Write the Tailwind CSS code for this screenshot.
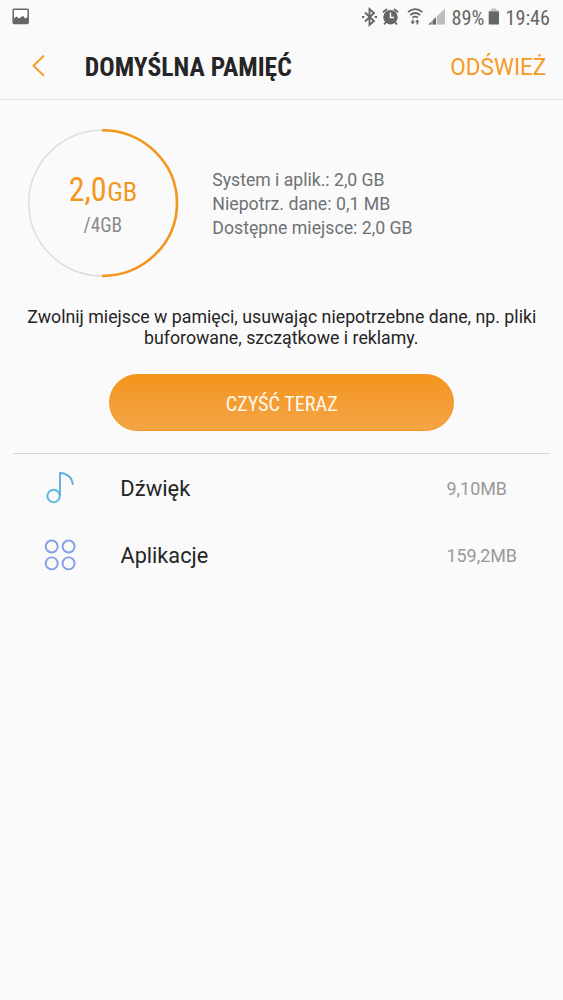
<!DOCTYPE html>
<html lang="pl">
<head>
<meta charset="utf-8">
<title>Domyślna pamięć</title>
<script src="https://cdn.jsdelivr.net/npm/@tailwindcss/browser@4"></script>
</head>
<body class="bg-[#fafafa]">
<div class="flex h-[1000px] w-[563px] flex-col overflow-hidden bg-[#fafafa] font-['Roboto',sans-serif] text-[#252525]">
  <div class="flex h-9 shrink-0 items-start justify-between">
    <svg class="h-9 w-10" viewBox="0 0 40 36"><rect x="13.2" y="9.2" width="15" height="14.4" rx="1" fill="#fff" stroke="#666" stroke-width="1.5"/><path d="M14 18.500l2.500-2 2.500 2 4-2.700 2 2.700 3-1.500v7H14z" fill="#666"/></svg>
    <svg class="h-9 w-[213px]" viewBox="350 0 213 36">
      <path d="M365 12.500l9 8.500-4.500 4V9l4.500 4-9 8.500M362 17h2.300M374.700 17h2.300" fill="none" stroke="#666" stroke-width="1.9"/>
      <circle cx="390.500" cy="17.200" r="7.200" fill="#666"/><path d="M383 12.200l4-3.200M398 12.200l-4-3.200M386 22l-2 2.500M395 22l2 2.500" stroke="#666" stroke-width="1.8"/><path d="M390.500 12.500V17.500H394" fill="none" stroke="#fafafa" stroke-width="1.5"/>
      <path d="M408 12.200q7.200-6 14.400 0M410.200 15q5-4 10 0M412.400 17.700q2.800-2.300 5.600 0" fill="none" stroke="#666" stroke-width="1.7"/>
      <path d="M412.700 19.500v3M417.300 24.500v-3" stroke="#666" stroke-width="1.4"/><path d="M410.500 21.500h4.400l-2.200 3zM415.100 22.300h4.400l-2.200-3z" fill="#666"/>
      <path d="M428.500 24.500L445 8.500v16z" fill="#bdbdbd"/><path d="M428.500 24.500l7.500-7.300v7.300z" fill="#666"/><path d="M432 20v5M436.500 16v9" stroke="#fafafa" stroke-width=".8"/>
      <path d="M491.300 8.500h5v2h2.700v2h-10v-2h2.300z" fill="#bdbdbd"/><path d="M488.700 11.500h10.300v13h-10.300z" fill="#666"/>
      <g font-family="'Roboto Condensed',Roboto,sans-serif" font-stretch="75%" font-size="20.300" fill="#666"><text x="451.500" y="24.500" textLength="33" lengthAdjust="spacingAndGlyphs">89%</text><text x="505.500" y="24.500" textLength="44.500" lengthAdjust="spacingAndGlyphs">19:46</text></g>
    </svg>
  </div>
  <header class="flex h-16 shrink-0 justify-between border-b border-[#dfdfdf]">
    <svg class="h-[63px] w-[320px]" viewBox="0 36 320 63"><path d="M44 55.500L33.500 65.700 44 75.900" fill="none" stroke="#f49a24" stroke-width="1.9"/><text x="84.800" y="75.500" font-family="'Roboto Condensed',Roboto,sans-serif" font-stretch="75%" font-weight="700" font-size="25" textLength="207" lengthAdjust="spacingAndGlyphs" fill="#252525">DOMYŚLNA PAMIĘĆ</text></svg>
    <svg class="h-[63px] w-[133px]" viewBox="430 36 133 63"><text x="450.300" y="74.700" font-size="23" textLength="96" lengthAdjust="spacingAndGlyphs" fill="#f49a24">ODŚWIEŻ</text></svg>
  </header>
  <main class="flex flex-col">
    <section class="flex h-[205px] items-start">
      <svg class="h-[190px] w-[200px] shrink-0" viewBox="0 100 200 190">
        <path d="M102.500 130.300A73.700 72.850 0 0 0 102.500 276" fill="none" stroke="#dedede" stroke-width="1.5"/>
        <path d="M102 130.300A75 72.850 0 0 1 102 276" fill="none" stroke="#f4951c" stroke-width="2.600"/>
        <g font-family="'Roboto Condensed',Roboto,sans-serif" font-stretch="75%" fill="#f4951c"><text x="68.700" y="201.300" font-size="33" textLength="38" lengthAdjust="spacingAndGlyphs">2,0</text><text x="107.200" y="201.300" font-size="25.500" textLength="30" lengthAdjust="spacingAndGlyphs">GB</text>
        <text x="83.500" y="231.500" font-size="19.300" textLength="38.500" lengthAdjust="spacingAndGlyphs" fill="#8a8a8a">/4GB</text></g>
      </svg>
      <svg class="h-[190px] w-[240px] shrink-0" viewBox="200 100 240 190"><g font-size="17.700" fill="#6e7274"><text x="212.300" y="185.500" textLength="172.300" lengthAdjust="spacingAndGlyphs">System i aplik.: 2,0 GB</text><text x="212.300" y="209.500" textLength="178" lengthAdjust="spacingAndGlyphs">Niepotrz. dane: 0,1 MB</text><text x="212.300" y="233.500" textLength="200.300" lengthAdjust="spacingAndGlyphs">Dostępne miejsce: 2,0 GB</text></g></svg>
    </section>
    <svg class="h-[50px] w-[563px]" viewBox="0 305 563 50"><g font-size="17.700" fill="#252525"><text x="27.300" y="322.500" textLength="509" lengthAdjust="spacingAndGlyphs">Zwolnij miejsce w pamięci, usuwając niepotrzebne dane, np. pliki</text><text x="144" y="343.600" textLength="274.500" lengthAdjust="spacingAndGlyphs">buforowane, szczątkowe i reklamy.</text></g></svg>
    <button class="mt-[19px] ml-[109px] h-[57px] w-[345px] overflow-hidden rounded-full border border-[#f3951d] bg-linear-to-b from-[#f4951b] to-[#f4a544]">
      <svg class="h-[55px] w-[343px]" viewBox="110 375 343 55"><text x="225.700" y="410.500" font-family="'Roboto Condensed',Roboto,sans-serif" font-stretch="75%" font-size="20.500" textLength="112" lengthAdjust="spacingAndGlyphs" fill="#fff8ed">CZYŚĆ TERAZ</text></svg>
    </button>
    <div class="mx-[13px] mt-[22px] h-px bg-[#d4d4d4]"></div>
    <svg class="h-[67px] w-[563px]" viewBox="0 454 563 67"><g fill="none" stroke="#5eb2dc" stroke-width="1.9"><circle cx="53.600" cy="496" r="6.200"/><path d="M60 496V473C66.500 472.800 72.700 478 72.700 485"/></g><text x="120.300" y="496.300" font-size="21.500" textLength="70" lengthAdjust="spacingAndGlyphs" fill="#252525">Dźwięk</text><text x="446.500" y="494.500" font-size="18" textLength="60.500" lengthAdjust="spacingAndGlyphs" fill="#999">9,10MB</text></svg>
    <svg class="h-[67px] w-[563px]" viewBox="0 521 563 67"><g fill="none" stroke="#829fe6" stroke-width="1.9"><circle cx="51.700" cy="546.500" r="6"/><circle cx="68.600" cy="546.500" r="6"/><circle cx="51.700" cy="563.400" r="6"/><circle cx="68.600" cy="563.400" r="6"/></g><text x="120.500" y="563.300" font-size="21.500" textLength="87.700" lengthAdjust="spacingAndGlyphs" fill="#252525">Aplikacje</text><text x="446.500" y="561.500" font-size="18" textLength="70.500" lengthAdjust="spacingAndGlyphs" fill="#999">159,2MB</text></svg>
  </main>
</div>
</body>
</html>
